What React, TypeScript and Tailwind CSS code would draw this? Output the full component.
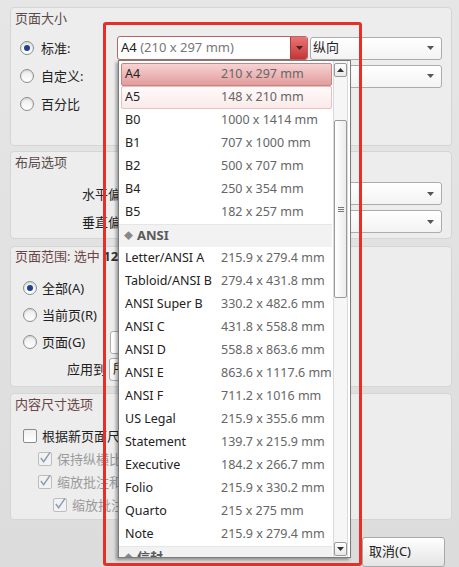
import React from "react";

const Radio = ({ checked }: { checked?: boolean }) => (
  <span className="w-[14px] h-[14px] rounded-full border border-[#8c8c8c] bg-gradient-to-b from-[#ececec] to-white flex items-center justify-center shrink-0 shadow-[inset_0_1px_2px_rgba(0,0,0,0.12)]">
    {checked && <span className="w-[6px] h-[6px] rounded-full bg-[#1f3f8f]" />}
  </span>
);

const Check = ({ checked, disabled }: { checked?: boolean; disabled?: boolean }) => (
  <span
    className={
      disabled
        ? "w-[14px] h-[14px] rounded-[2px] border border-[#bdbdbd] bg-[#f2f2f2] flex items-center justify-center shrink-0"
        : "w-[14px] h-[14px] rounded-[2px] border border-[#8c8c8c] bg-gradient-to-b from-[#f0f0f0] to-white flex items-center justify-center shrink-0"
    }
  >
    {checked && (
      <svg width="13" height="13" viewBox="0 0 13 13" className="-mt-[3px]">
        <path d="M2 7 L5 11 L12 1" fill="none" stroke="#8d9db3" strokeWidth="1.6" />
      </svg>
    )}
  </span>
);

const Caret = () => (
  <svg width="7" height="4" viewBox="0 0 7 4" className="shrink-0">
    <path d="M0 0H7L3.5 4Z" fill="#555" />
  </svg>
);

const Combo = ({ text, className }: { text?: string; className: string }) => (
  <div
    className={
      "h-[23px] rounded-[3px] border border-[#acacac] bg-gradient-to-b from-white to-[#f3f3f3] flex items-center pl-[2px] pr-[7px] shrink-0 " +
      className
    }
  >
    <span className="flex-1 text-[13px] text-[#222] whitespace-nowrap overflow-hidden">{text}</span>
    <Caret />
  </div>
);

type Item = { name: string; size?: string; header?: boolean };
const items: Item[] = [
  { name: "A4", size: "210 x 297 mm" },
  { name: "A5", size: "148 x 210 mm" },
  { name: "B0", size: "1000 x 1414 mm" },
  { name: "B1", size: "707 x 1000 mm" },
  { name: "B2", size: "500 x 707 mm" },
  { name: "B4", size: "250 x 354 mm" },
  { name: "B5", size: "182 x 257 mm" },
  { name: "ANSI", header: true },
  { name: "Letter/ANSI A", size: "215.9 x 279.4 mm" },
  { name: "Tabloid/ANSI B", size: "279.4 x 431.8 mm" },
  { name: "ANSI Super B", size: "330.2 x 482.6 mm" },
  { name: "ANSI C", size: "431.8 x 558.8 mm" },
  { name: "ANSI D", size: "558.8 x 863.6 mm" },
  { name: "ANSI E", size: "863.6 x 1117.6 mm" },
  { name: "ANSI F", size: "711.2 x 1016 mm" },
  { name: "US Legal", size: "215.9 x 355.6 mm" },
  { name: "Statement", size: "139.7 x 215.9 mm" },
  { name: "Executive", size: "184.2 x 266.7 mm" },
  { name: "Folio", size: "215.9 x 330.2 mm" },
  { name: "Quarto", size: "215 x 275 mm" },
  { name: "Note", size: "215.9 x 279.4 mm" },
  { name: "信封", header: true },
];

const rowClass = (i: number) => {
  if (i === 0)
    return "h-[23px] flex items-center rounded-[2px] border border-[#c98383] bg-gradient-to-b from-[#f6d3d3] to-[#e29c9c] pl-[3px]";
  if (i === 1)
    return "h-[23px] flex items-center rounded-[2px] border border-[#e8c0c0] bg-gradient-to-b from-[#fffafa] to-[#fbeaea] pl-[3px]";
  return "h-[23px] flex items-center pl-[4px]";
};

export default function App() {
  return (
    <div className="relative w-[459px] h-[567px] overflow-hidden bg-gradient-to-b from-[#e6e6e6] to-[#dcdcdc] font-['Noto_Sans','Noto_Sans_CJK_SC',sans-serif] text-[13px] text-[#222]">
      <div className="flex flex-col pl-[10px] pr-[7px] pt-[7px]">
        {/* Panel 1 */}
        <div className="h-[139px] rounded-[4px] border border-[#d5d5d5] bg-[#ededed] pl-[4px] pr-[9px] pt-[1px]">
          <div className="h-[18px] leading-[18px] text-[#5b4b4b]">页面大小</div>
          <div className="mt-[9px] flex flex-col gap-[4px]">
            <div className="h-[24px] flex items-center">
              <span className="ml-[5px]"><Radio checked /></span>
              <span className="ml-[7px] w-[76px] leading-[18px]">标准:</span>
              <div className="w-[191px] h-[24px] rounded-[3px] border border-[#b86464] bg-white flex items-center pl-[3px] shrink-0 overflow-hidden">
                <span className="flex-1 whitespace-nowrap">
                  A4 <span className="text-[#777]">(210 x 297 mm)</span>
                </span>
                <span className="w-[17px] h-[22px] bg-gradient-to-b from-[#e87474] to-[#c43434] border-l border-[#a84040] flex items-center justify-center">
                  <svg width="7" height="4" viewBox="0 0 7 4"><path d="M0 0H7L3.5 4Z" fill="#4a2222" /></svg>
                </span>
              </div>
              <Combo text="纵向" className="ml-[2px] w-[132px]" />
            </div>
            <div className="h-[24px] flex items-center">
              <span className="ml-[5px]"><Radio /></span>
              <span className="ml-[7px] w-[76px] leading-[18px]">自定义:</span>
              <span className="w-[191px] shrink-0" />
              <Combo className="ml-[2px] w-[132px]" />
            </div>
            <div className="h-[24px] flex items-center">
              <span className="ml-[5px]"><Radio /></span>
              <span className="ml-[7px] leading-[18px]">百分比</span>
            </div>
          </div>
        </div>

        {/* Panel 2 */}
        <div className="mt-[5px] h-[88px] rounded-[4px] border border-[#d5d5d5] bg-[#ededed] pl-[4px] pr-[9px] pt-[1px]">
          <div className="h-[18px] leading-[18px] text-[#5b4b4b]">布局选项</div>
          <div className="mt-[11px] flex flex-col gap-[5px]">
            <div className="h-[23px] flex items-center">
              <span className="ml-[67px] w-[36px] leading-[18px] whitespace-nowrap overflow-hidden">水平偏移:</span>
              <span className="w-[44px] shrink-0" />
              <Combo className="flex-1" />
            </div>
            <div className="h-[23px] flex items-center">
              <span className="ml-[67px] w-[36px] leading-[18px] whitespace-nowrap overflow-hidden">垂直偏移:</span>
              <span className="w-[44px] shrink-0" />
              <Combo className="flex-1" />
            </div>
          </div>
        </div>

        {/* Panel 3 */}
        <div className="mt-[7px] h-[141px] rounded-[4px] border border-[#d5d5d5] bg-[#ededed] pl-[4px] pr-[9px]">
          <div className="h-[18px] w-[103px] leading-[18px] text-[#6a4545] whitespace-nowrap overflow-hidden">
            页面范围: 选中 <span className="font-bold text-[#333]">12</span> 页
          </div>
          <div className="mt-[11px] flex flex-col gap-[3px]">
            <div className="h-[24px] flex items-center">
              <span className="ml-[8px]"><Radio checked /></span>
              <span className="ml-[5px] leading-[18px]">全部(A)</span>
            </div>
            <div className="h-[24px] flex items-center">
              <span className="ml-[8px]"><Radio /></span>
              <span className="ml-[5px] leading-[18px]">当前页(R)</span>
            </div>
            <div className="h-[24px] flex items-center">
              <span className="ml-[8px]"><Radio /></span>
              <span className="ml-[5px] w-[68px] leading-[18px]">页面(G)</span>
              <div className="w-[120px] h-[23px] rounded-[3px] border border-[#acacac] bg-white" />
            </div>
            <div className="h-[24px] flex items-center">
              <span className="ml-[52px] w-[42px] leading-[18px]">应用到</span>
              <div className="w-[200px] h-[23px] rounded-[3px] border border-[#acacac] bg-gradient-to-b from-white to-[#f3f3f3] pl-[3px] flex items-center shrink-0">
                <span className="w-[5px] overflow-hidden whitespace-nowrap">所</span>
              </div>
            </div>
          </div>
        </div>

        {/* Panel 4 */}
        <div className="mt-[6px] h-[127px] rounded-[4px] border border-[#d5d5d5] bg-[#ededed] pl-[4px] pr-[9px] pt-[1px]">
          <div className="h-[18px] leading-[18px] text-[#6a4545]">内容尺寸选项</div>
          <div className="mt-[11px] flex flex-col">
            <div className="h-[23px] flex items-center">
              <span className="ml-[8px]"><Check /></span>
              <span className="ml-[5px] w-[76px] leading-[18px] whitespace-nowrap overflow-hidden">根据新页面尺寸调整内容大小</span>
            </div>
            <div className="h-[23px] flex items-center">
              <span className="ml-[23px]"><Check checked disabled /></span>
              <span className="ml-[5px] w-[61px] leading-[18px] text-[#9a9a9a] whitespace-nowrap overflow-hidden">保持纵横比</span>
            </div>
            <div className="h-[23px] flex items-center">
              <span className="ml-[23px]"><Check checked disabled /></span>
              <span className="ml-[5px] w-[61px] leading-[18px] text-[#9a9a9a] whitespace-nowrap overflow-hidden">缩放批注和表单域</span>
            </div>
            <div className="h-[23px] flex items-center">
              <span className="ml-[38px]"><Check checked disabled /></span>
              <span className="ml-[5px] w-[46px] leading-[18px] text-[#9a9a9a] whitespace-nowrap overflow-hidden">缩放批注线宽</span>
            </div>
          </div>
        </div>

        {/* Buttons */}
        <div className="mt-[17px] flex justify-end pr-[7px]">
          <div className="w-[83px] h-[30px] rounded-[3px] border border-[#a8a8a8] bg-gradient-to-b from-white to-[#e4e4e4] flex items-center pl-[6px] text-[#222]">
            取消(C)
          </div>
        </div>
      </div>

      {/* Red highlight */}
      <div className="absolute left-[103px] top-[22px] w-[259px] h-[544px] border-[3px] border-[#e5302a] rounded-[3px]" />

      {/* Dropdown list */}
      <div className="absolute left-[118px] top-[60px] w-[233px] h-[498px] bg-white border border-[#7b7b7b] shadow-[-2px_2px_3px_rgba(0,0,0,0.35)] overflow-hidden flex text-[12.5px]">
        <div className="ml-[2px] w-[211px] pt-[2px] flex flex-col shrink-0">
          {items.map((it, i) =>
            it.header ? (
              <div
                key={i}
                className="h-[23px] shrink-0 flex items-center pl-[5px] bg-[#f2f2f2] border-t border-[#e6e6e6] -ml-[2px] w-[213px]"
              >
                <span className="text-[9px] text-[#888] mr-[4px]">◆</span>
                <span className="font-bold text-[13px] text-[#5a5a5a]">{it.name}</span>
              </div>
            ) : (
              <div key={i} className={rowClass(i) + " shrink-0"}>
                <span className="w-[96px] shrink-0 whitespace-nowrap text-[#222]">{it.name}</span>
                <span className="whitespace-nowrap text-[#666]">{it.size}</span>
              </div>
            )
          )}
        </div>
        {/* Scrollbar */}
        <div className="ml-[1px] w-[15px] pt-[2px] pb-[1px] flex flex-col shrink-0 bg-[#f6f6f6] border-x border-[#dadada]">
          <div className="h-[14px] rounded-[2px] border border-[#9a9a9a] bg-gradient-to-b from-white to-[#e8e8e8] flex items-center justify-center shrink-0">
            <svg width="7" height="4" viewBox="0 0 7 4"><path d="M0 4H7L3.5 0Z" fill="#333" /></svg>
          </div>
          <div className="mt-[43px] h-[178px] rounded-[2px] border border-[#9a9a9a] bg-gradient-to-r from-white to-[#ececec] flex items-center justify-center shrink-0">
            <span className="flex flex-col gap-[1px]">
              <span className="w-[6px] h-[1px] bg-[#777]" />
              <span className="w-[6px] h-[1px] bg-[#777]" />
              <span className="w-[6px] h-[1px] bg-[#777]" />
            </span>
          </div>
          <div className="flex-1" />
          <div className="h-[14px] rounded-[2px] border border-[#9a9a9a] bg-gradient-to-b from-white to-[#e8e8e8] flex items-center justify-center shrink-0">
            <svg width="7" height="4" viewBox="0 0 7 4"><path d="M0 0H7L3.5 4Z" fill="#333" /></svg>
          </div>
        </div>
      </div>
    </div>
  );
}
